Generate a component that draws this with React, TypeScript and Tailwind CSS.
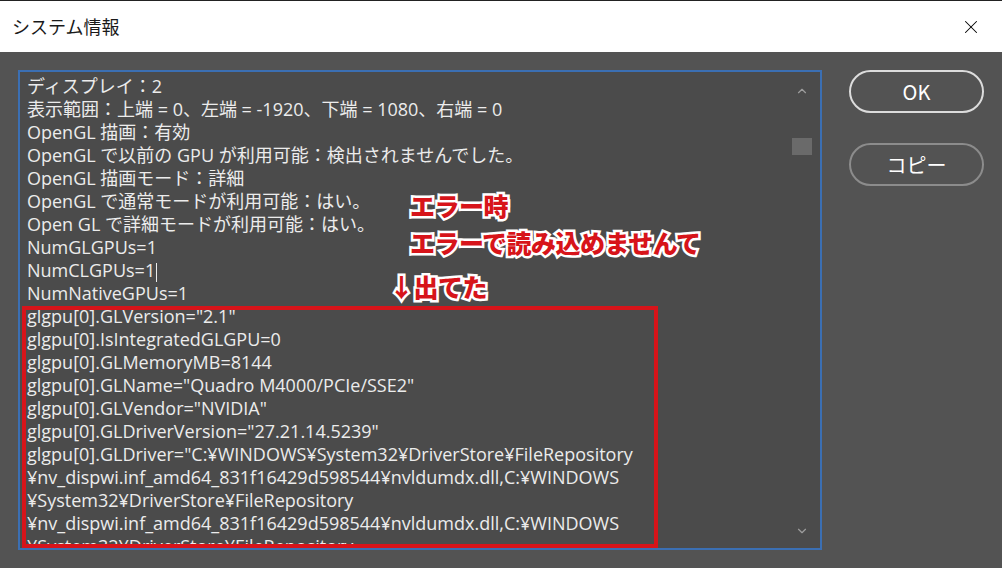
import { ChevronUp, ChevronDown, X } from "lucide-react";

const lines = [
  "ディスプレイ：2",
  "表示範囲：上端 = 0、左端 = -1920、下端 = 1080、右端 = 0",
  "OpenGL 描画：有効",
  "OpenGL で以前の GPU が利用可能：検出されませんでした。",
  "OpenGL 描画モード：詳細",
  "OpenGL で通常モードが利用可能：はい。",
  "Open GL で詳細モードが利用可能：はい。",
  "NumGLGPUs=1",
  "NumCLGPUs=1",
  "NumNativeGPUs=1",
  'glgpu[0].GLVersion="2.1"',
  "glgpu[0].IsIntegratedGLGPU=0",
  "glgpu[0].GLMemoryMB=8144",
  'glgpu[0].GLName="Quadro M4000/PCIe/SSE2"',
  'glgpu[0].GLVendor="NVIDIA"',
  'glgpu[0].GLDriverVersion="27.21.14.5239"',
  'glgpu[0].GLDriver="C:¥WINDOWS¥System32¥DriverStore¥FileRepository',
  "¥nv_dispwi.inf_amd64_831f16429d598544¥nvldumdx.dll,C:¥WINDOWS",
  "¥System32¥DriverStore¥FileRepository",
  "¥nv_dispwi.inf_amd64_831f16429d598544¥nvldumdx.dll,C:¥WINDOWS",
  "¥System32¥DriverStore¥FileRepository",
];

const note =
  "absolute whitespace-nowrap text-[25px] font-black leading-none tracking-[-0.5px] text-[#d7141a] [-webkit-text-stroke:5px_white] [paint-order:stroke_fill]";

export default function App() {
  return (
    <div className="w-[1002px] h-[568px] overflow-hidden bg-[#535353] font-['Open_Sans','Noto_Sans_CJK_JP',sans-serif]">
      {/* title bar */}
      <div className="h-[52px] border-t border-[#222] bg-white flex items-center justify-between pl-[12px] pr-[20px]">
        <span className="text-[18px] text-[#1a1a1a] font-['Noto_Sans_CJK_JP',sans-serif]">システム情報</span>
        <X size={22} strokeWidth={1.1} className="text-black" />
      </div>

      <div className="flex pt-[18px] pl-[18px]">
        {/* info box */}
        <div className="relative w-[804px] h-[480px] border-2 border-[#3b6fb3] bg-[#4b4b4b] overflow-hidden flex">
          <div className="flex-1 pl-[7px] pt-[3px] text-[18px] leading-[23px] text-[#ececec]">
            {lines.map((l, i) => (
              <div key={i} className="whitespace-nowrap">
                {l}
                {i === 8 && <span className="inline-block w-px h-[19px] bg-[#ececec] align-middle ml-px" />}
              </div>
            ))}
          </div>
          {/* scrollbar */}
          <div className="w-[32px] flex flex-col items-center pt-[12px] pb-[10px] pr-[4px]">
            <ChevronUp size={14} strokeWidth={2} className="text-[#9d9d9d]" />
            <div className="w-[20px] h-[17px] bg-[#6a6a6a] mt-[40px]" />
            <div className="flex-1" />
            <ChevronDown size={14} strokeWidth={2} className="text-[#9d9d9d]" />
          </div>

          {/* annotation overlay */}
          <div className="absolute left-[2px] top-[234px] w-[636px] h-[242px] border-[4px] border-[#d7141a]" />
          <span className={note + " left-[390px] top-[122px]"}>エラー時</span>
          <span className={note + " left-[390px] top-[159px]"}>エラーで読み込めませんて</span>
          <span className={note + " left-[369px] top-[203px]"}>↓出てた</span>
        </div>

        {/* buttons */}
        <div className="ml-[27px] flex flex-col gap-[30px] font-['Noto_Sans_CJK_JP',sans-serif]">
          <button className="w-[135px] h-[43px] rounded-full border-2 border-[#dcdcdc] text-white text-[20px] flex items-center justify-center">
            OK
          </button>
          <button className="w-[135px] h-[43px] rounded-full border-2 border-[#8c8c8c] text-white text-[20px] flex items-center justify-center">
            コピー
          </button>
        </div>
      </div>
    </div>
  );
}
